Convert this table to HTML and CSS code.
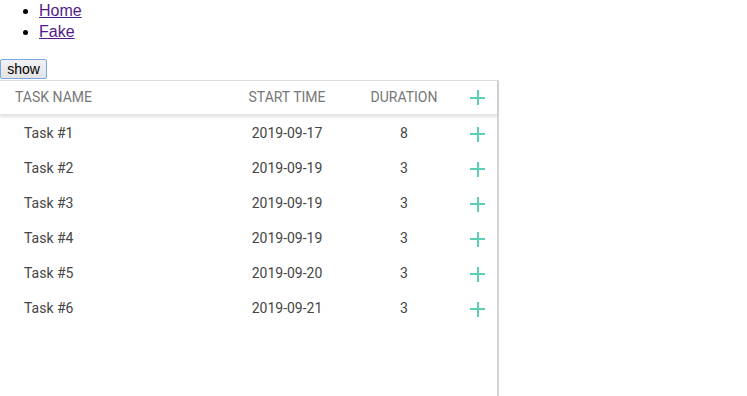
FILE: index.html
```html
<!DOCTYPE html>
<html>
<head>
<meta charset="utf-8">
<link rel="stylesheet" href="styles.css">
</head>
<body>
<ul class="nav">
  <li><a href="#">Home</a></li>
  <li><a href="#">Fake</a></li>
</ul>
<button class="show-btn">show</button>
<div class="gantt">
  <div class="grid-head">
    <div class="col name">Task name</div>
    <div class="col start">Start time</div>
    <div class="col dur">Duration</div>
    <div class="col add"><span class="plus"></span></div>
  </div>
  <div class="rows">
    <div class="row"><div class="col name cell">Task #1</div><div class="col start">2019-09-17</div><div class="col dur">8</div><div class="col add"><span class="plus"></span></div></div>
    <div class="row"><div class="col name cell">Task #2</div><div class="col start">2019-09-19</div><div class="col dur">3</div><div class="col add"><span class="plus"></span></div></div>
    <div class="row"><div class="col name cell">Task #3</div><div class="col start">2019-09-19</div><div class="col dur">3</div><div class="col add"><span class="plus"></span></div></div>
    <div class="row"><div class="col name cell">Task #4</div><div class="col start">2019-09-19</div><div class="col dur">3</div><div class="col add"><span class="plus"></span></div></div>
    <div class="row"><div class="col name cell">Task #5</div><div class="col start">2019-09-20</div><div class="col dur">3</div><div class="col add"><span class="plus"></span></div></div>
    <div class="row"><div class="col name cell">Task #6</div><div class="col start">2019-09-21</div><div class="col dur">3</div><div class="col add"><span class="plus"></span></div></div>
  </div>
</div>
</body>
</html>
```
FILE: styles.css
```css
html, body {
  margin: 0;
  padding: 0;
  background: #fff;
}
body {
  font-family: "Liberation Sans", Arial, sans-serif;
  overflow: hidden;
  height: 396px;
}
.nav {
  margin: 0 0 17px;
  padding-left: 39px;
  font-size: 16px;
  line-height: 21px;
}
.nav a {
  color: #551a8b;
}
.show-btn {
  display: block;
  margin: 0;
  height: 20px;
  width: 47px;
  padding: 0;
  font-family: "Liberation Sans", Arial, sans-serif;
  font-size: 14px;
  color: #000;
  background: linear-gradient(#f2f2f2, #e3e3e3);
  border: 1px solid #7aa7e6;
  border-radius: 2px;
}
.gantt {
  margin-top: 1px;
  width: 497px;
  height: 316px;
  border-top: 1px solid #dcdcdc;
  border-right: 2px solid #d6d6d6;
  font-family: Roboto, Arial, sans-serif;
  font-size: 14px;
  box-sizing: content-box;
}
.grid-head {
  display: flex;
  height: 34px;
  box-sizing: border-box;
  padding-bottom: 1px;
  align-items: center;
  color: #777;
  text-transform: uppercase;
  box-shadow: 0 2px 3px rgba(0,0,0,0.12);
  border-bottom: 1px solid #e4e4e4;
  position: relative;
}
.grid-head .plus {
  margin-top: 1px;
}
.row {
  display: flex;
  height: 35px;
  box-sizing: border-box;
  padding-bottom: 2px;
  align-items: center;
  color: #454545;
}
.row .plus {
  margin-top: 3px;
}
.rows {
  padding-top: 1px;
}
.col {
  flex: none;
}
.name {
  width: 215px;
  padding-left: 15px;
  box-sizing: border-box;
}
.name.cell {
  padding-left: 24px;
}
.start {
  width: 144px;
  text-align: center;
}
.dur {
  width: 90px;
  text-align: center;
}
.add {
  width: 48px;
  display: flex;
  justify-content: center;
  padding-left: 9px;
  box-sizing: border-box;
}
.plus {
  position: relative;
  display: block;
  width: 15px;
  height: 15px;
}
.plus::before, .plus::after {
  content: "";
  position: absolute;
  background: #5ecdb6;
}
.plus::before {
  left: 0;
  top: 6.5px;
  width: 15px;
  height: 2px;
}
.plus::after {
  top: 0;
  left: 6.5px;
  width: 2px;
  height: 15px;
}
```
